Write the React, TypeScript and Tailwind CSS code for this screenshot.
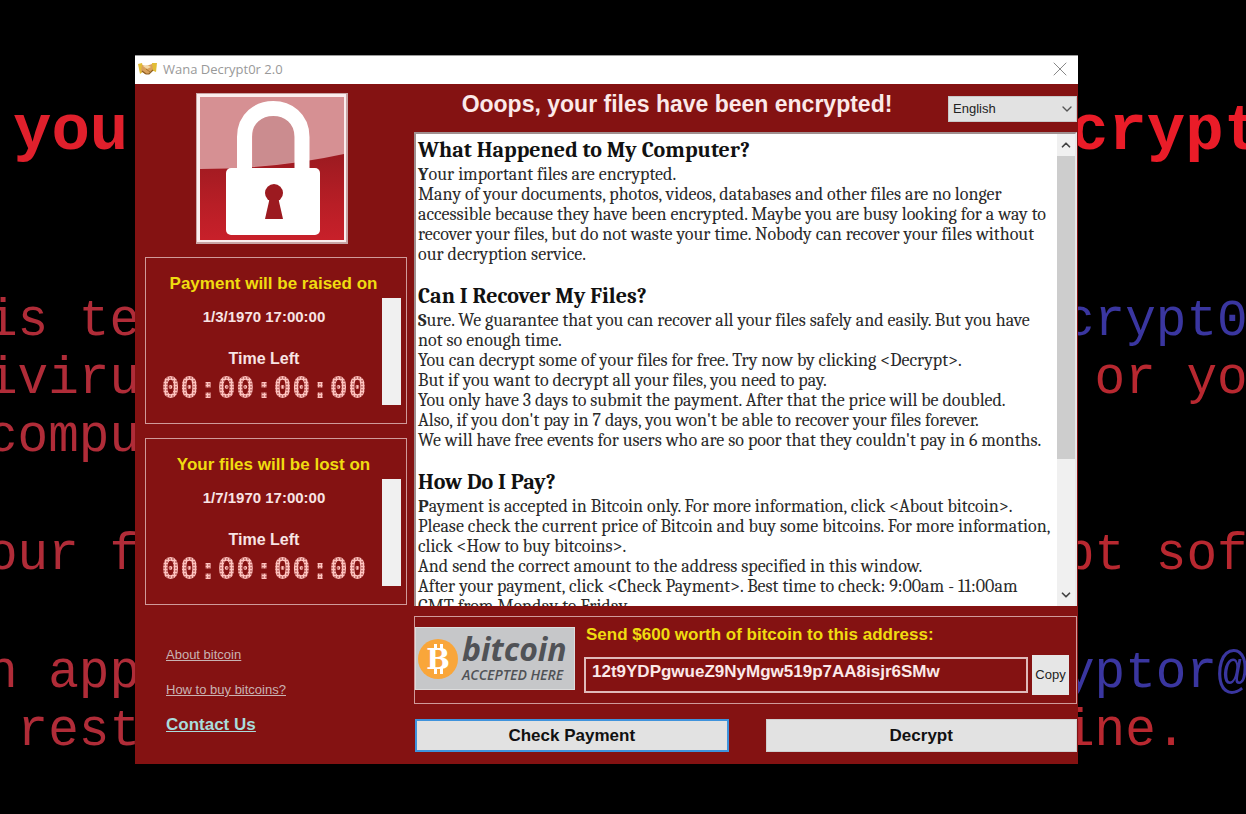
import React, { useState } from 'react';
import { ChevronDown, ChevronUp, X } from 'lucide-react';

const sections = [
  {
    title: 'What Happened to My Computer?',
    lines: [
      'Your important files are encrypted.',
      'Many of your documents, photos, videos, databases and other files are no longer',
      'accessible because they have been encrypted. Maybe you are busy looking for a way to',
      'recover your files, but do not waste your time. Nobody can recover your files without',
      'our decryption service.',
    ],
  },
  {
    title: 'Can I Recover My Files?',
    lines: [
      'Sure. We guarantee that you can recover all your files safely and easily. But you have',
      'not so enough time.',
      'You can decrypt some of your files for free. Try now by clicking <Decrypt>.',
      'But if you want to decrypt all your files, you need to pay.',
      'You only have 3 days to submit the payment. After that the price will be doubled.',
      "Also, if you don't pay in 7 days, you won't be able to recover your files forever.",
      "We will have free events for users who are so poor that they couldn't pay in 6 months.",
    ],
  },
  {
    title: 'How Do I Pay?',
    lines: [
      'Payment is accepted in Bitcoin only. For more information, click <About bitcoin>.',
      'Please check the current price of Bitcoin and buy some bitcoins. For more information,',
      'click <How to buy bitcoins>.',
      'And send the correct amount to the address specified in this window.',
      'After your payment, click <Check Payment>. Best time to check: 9:00am - 11:00am',
      'GMT from Monday to Friday.',
    ],
  },
];

const HandshakeIcon = () => (
  <svg viewBox="0 0 19 14" className="h-3.5 w-[19px] shrink-0" aria-hidden="true">
    <path d="M0 2 L4 1 L6 9 L2 12 Z" fill="#e2bd35" />
    <path d="M19 1 L14 1 L13 8 L18 10 Z" fill="#e2bd35" />
    <path d="M4 3 L8 4 L14 2 L15 8 L11 12 L7 12 L3 9 Z" fill="#d9a05c" />
    <path d="M5 4 L9 3 L13 5 L9 7 Z" fill="#f3d9a8" />
    <path d="M4 9 L8 12 L11 12 L15 8" fill="none" stroke="#8d5f22" strokeWidth="1.200" />
    <path d="M8 7 L12 10" stroke="#a8762f" strokeWidth="1" />
  </svg>
);

const LockPicture = () => (
  <svg viewBox="0 0 152 151" className="ml-[51px] h-[151px] w-[152px] shrink-0" aria-label="Padlock">
    <defs>
      <linearGradient id="lockBg" x1="0" y1="0" x2="0" y2="1">
        <stop offset="0.4" stopColor="#9c1a20" />
        <stop offset="0.75" stopColor="#b81e26" />
        <stop offset="1" stopColor="#c8202a" />
      </linearGradient>
    </defs>
    <rect x="0" y="0" width="152" height="151" fill="#c9a6a6" />
    <rect x="1" y="1" width="149" height="148" fill="#fbeeee" />
    <rect x="4" y="4" width="144" height="143" fill="url(#lockBg)" />
    <path d="M4 4 H148 V61 Q80 76 4 76 Z" fill="#d69093" />
    <path d="M57 75 V44 C57 12 98 12 98 44 V69 Q80 72 57 73 Z" fill="#cb8c8f" />
    <path d="M48.500 80 V44 C48.500 6 106 6 106 44 V80" fill="none" stroke="#fff" strokeWidth="15" />
    <rect x="30" y="75" width="94" height="67" rx="5" fill="#fff" />
    <circle cx="78" cy="100" r="9" fill="#9c1a20" />
    <path d="M74 104 H82 L87 126 H69 Z" fill="#9c1a20" />
  </svg>
);

const BitcoinBadge = () => (
  <div className="flex h-[63px] w-[160px] shrink-0 items-center border border-[#dcdcdc] bg-[#c6c7c9]">
    <svg viewBox="0 0 44 44" className="h-11 w-11 shrink-0" aria-hidden="true">
      <circle cx="22" cy="22" r="20" fill="#f9a63a" />
      <rect x="18" y="7" width="3" height="6" fill="#fff" />
      <rect x="24" y="7" width="3" height="6" fill="#fff" />
      <rect x="18" y="31" width="3" height="6" fill="#fff" />
      <rect x="24" y="31" width="3" height="6" fill="#fff" />
      <text x="22" y="32" textAnchor="middle" fontFamily="DejaVu Serif, serif" fontWeight="700" fontSize="28" fill="#fff">
        B
      </text>
    </svg>
    <div className="ml-0.5 whitespace-nowrap font-['Open_Sans',sans-serif] italic text-[#505256]">
      <div className="text-[32px] font-bold leading-[32px]">bitcoin</div>
      <div className="text-[14px] font-semibold leading-5">ACCEPTED HERE</div>
    </div>
  </div>
);

const CountdownPanel = ({ title, date }: { title: string; date: string }) => (
  <section className="h-[167px] border border-[#d09a9a] pr-[5px] pt-4 text-center font-bold">
    <h2 className="text-[17px] leading-5 text-[#f0dc10]">{title}</h2>
    <div className="mt-1 flex">
      <div className="flex-1 pt-[9px] leading-5 text-[#f8e4e4]">
        <div className="text-[15px]">{date}</div>
        <div className="mt-[22px] text-[16px]">Time Left</div>
        {/* LED style digits: dots clipped to the glyphs */}
        <div className="mt-1.5 bg-[radial-gradient(circle,#ffc4c0_1px,#8c2020_2px)] bg-[length:3px_3px] bg-clip-text font-['DejaVu_Sans_Mono',monospace] text-[31px] font-bold leading-6 text-transparent">
          00:00:00:00
        </div>
      </div>
      <div className="h-[107px] w-[19px] bg-[#f0f0f0]" />
    </div>
  </section>
);

const App = () => {
  const [language, setLanguage] = useState('English');

  return (
    <div className="grid min-h-screen grid-cols-[135px_1fr_168px] overflow-hidden bg-black font-['Liberation_Sans',Arial,sans-serif]">
      {/* Wallpaper text, left */}
      <div className="-ml-[13px] whitespace-pre pt-[100px] font-['Liberation_Mono',monospace] text-[51px] leading-[58px] text-[#b02c38]">
        <div className="mb-[129px] pl-[26px] text-[64px] font-bold leading-[64px] text-[#e0202c]">you</div>
        <div className="flex flex-col gap-[60px]">
          <div>
            <div>is te</div>
            <div>iviru</div>
            <div>compu</div>
          </div>
          <div>our f</div>
          <div>
            <div>n app</div>
            <div>{' rest'}</div>
          </div>
        </div>
      </div>

      {/* Window */}
      <main className="relative z-10 mt-[55px] self-start bg-[#841212]">
        <header className="flex h-[29px] items-center border-t border-[#9a9a9a] bg-white pb-0.5 pl-[3px] pr-1.5">
          <HandshakeIcon />
          <h1 className="ml-1.5 flex-1 font-['Open_Sans',sans-serif] text-[13px] leading-5 text-[#999]">Wana Decrypt0r 2.0</h1>
          <button type="button" aria-label="Close" className="text-[#888]">
            <X size={24} strokeWidth={1} />
          </button>
        </header>

        <div className="flex pb-3">
          <aside className="flex w-[279px] shrink-0 flex-col pl-2.5 pr-[7px] pt-[9px]">
            <LockPicture />
            <div className="mt-[13px] flex flex-col gap-3.5">
              <CountdownPanel title="Payment will be raised on" date="1/3/1970 17:00:00" />
              <CountdownPanel title="Your files will be lost on" date="1/7/1970 17:00:00" />
            </div>
            <nav className="flex flex-col items-start gap-[15px] pl-[21px] pt-10 text-[13px] leading-5 text-[#c9b3b3] underline">
              <a href="#about">About bitcoin</a>
              <a href="#buy">How to buy bitcoins?</a>
              <a href="#contact" className="text-[17px] font-bold text-[#a9dcdc]">
                Contact Us
              </a>
            </nav>
          </aside>

          <div className="flex min-w-0 flex-1 flex-col pr-px">
            <div className="flex h-12 items-start">
              <h2 className="flex-1 pr-2 pt-1.5 text-center text-[23px] font-bold leading-7 text-[#fbe9e9]">
                Ooops, your files have been encrypted!
              </h2>
              <div className="relative mt-3 w-[129px]">
                <select
                  aria-label="Language"
                  value={language}
                  onChange={(e) => setLanguage(e.target.value)}
                  className="h-[26px] w-full appearance-none border border-[#c8c8c8] bg-[#e2e2e2] pl-1 text-[13px] text-[#222]"
                >
                  <option>English</option>
                </select>
                <ChevronDown size={16} strokeWidth={2} className="pointer-events-none absolute right-0.5 top-[5px] text-[#555]" />
              </div>
            </div>

            <div className="flex h-[474px] border-2 border-b-0 border-[#a09090] border-r-[#e8e8e8] bg-white">
              <div className="flex flex-1 flex-col gap-[17px] overflow-hidden whitespace-nowrap pl-0.5 pt-0.5 font-[Cambria,Caladea,'Liberation_Serif',serif] text-[18px] leading-5 text-[#2a2a2a]">
                {sections.map((section) => (
                  <section key={section.title}>
                    <h3 className="mb-px text-[22px] font-bold leading-7 text-[#111]">{section.title}</h3>
                    {section.lines.map((line) => (
                      <p key={line} className={line === section.lines[0] ? 'first-letter:font-bold' : ''}>
                        {line}
                      </p>
                    ))}
                  </section>
                ))}
              </div>
              <div className="flex w-[18px] flex-col items-center bg-[#f0f0f0] text-[#444]">
                <ChevronUp size={14} strokeWidth={3} className="my-1 shrink-0" />
                <div className="h-[303px] w-full bg-[#cdcdcd]" />
                <ChevronDown size={14} strokeWidth={3} className="mb-1 mt-auto shrink-0" />
              </div>
            </div>

            <div className="mt-2.5 flex h-[88px] items-start border border-[#d09a9a] pr-[7px] pt-2.5">
              <BitcoinBadge />
              <div className="ml-[9px] flex-1">
                <label htmlFor="address" className="-mt-0.5 block pl-0.5 text-[17px] font-bold leading-5 text-[#f0dc10]">
                  Send $600 worth of bitcoin to this address:
                </label>
                <div className="flex items-center gap-1 pt-2.5">
                  <input
                    id="address"
                    readOnly
                    value="12t9YDPgwueZ9NyMgw519p7AA8isjr6SMw"
                    className="h-9 min-w-0 flex-1 border-2 border-[#e0baba] bg-transparent pb-1.5 pl-1.5 text-[17px] font-bold text-[#fbe9e9]"
                  />
                  <button type="button" className="h-10 w-[37px] bg-[#e6e6e6] text-[13px] text-[#222]">
                    Copy
                  </button>
                </div>
              </div>
            </div>

            <div className="mt-[15px] flex gap-[37px] pl-px text-[17px] font-bold text-[#111]">
              <button type="button" className="h-[33px] flex-1 border-2 border-[#3f93dc] bg-[#e2e2e2]">
                Check Payment
              </button>
              <button type="button" className="h-[33px] flex-1 border border-[#cfcfcf] bg-[#e2e2e2]">
                Decrypt
              </button>
            </div>
          </div>
        </div>
      </main>

      {/* Wallpaper text, right */}
      <div className="-ml-[14px] whitespace-pre pt-[100px] font-['Liberation_Mono',monospace] text-[51px] leading-[58px] text-[#b82830]">
        <div className="mb-[129px] pl-1.5 text-[64px] font-bold leading-[64px] text-[#ea1c28]">crypt</div>
        <div className="flex flex-col gap-[60px]">
          <div>
            <div className="text-[#3a36a0]">crypt0</div>
            <div>{' or yo'}</div>
            <div> </div>
          </div>
          <div>pt sof</div>
          <div>
            <div className="text-[#3a36a0]">yptor@</div>
            <div>ine.</div>
          </div>
        </div>
      </div>
    </div>
  );
};

export default App;
